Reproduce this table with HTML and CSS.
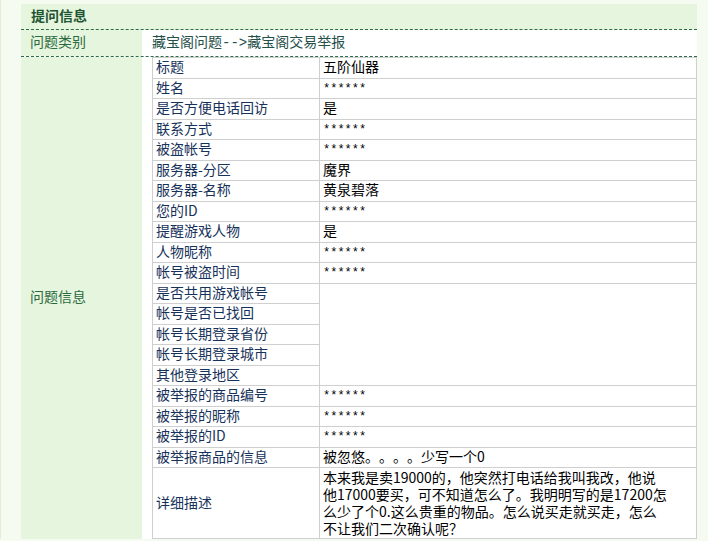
FILE: index.html
```html
<!DOCTYPE html>
<html lang="zh-CN">
<head>
<meta charset="utf-8">
<title>提问信息</title>
<link rel="stylesheet" href="styles.css">
</head>
<body>
<div class="page">
  <div class="panel">
    <div class="head">提问信息</div>
    <div class="row row-cat">
      <div class="label">问题类别</div>
      <div class="cat-value">藏宝阁问题<span class="arrow">--&gt;</span>藏宝阁交易举报</div>
    </div>
    <div class="row row-info">
      <div class="label label-mid">问题信息</div>
      <div class="info-cell">
        <table class="info">
          <tr><td class="k">标题</td><td class="v">五阶仙器</td></tr>
          <tr><td class="k">姓名</td><td class="v star">******</td></tr>
          <tr><td class="k">是否方便电话回访</td><td class="v">是</td></tr>
          <tr><td class="k">联系方式</td><td class="v star">******</td></tr>
          <tr><td class="k">被盗帐号</td><td class="v star">******</td></tr>
          <tr><td class="k">服务器-分区</td><td class="v">魔界</td></tr>
          <tr><td class="k">服务器-名称</td><td class="v">黄泉碧落</td></tr>
          <tr><td class="k">您的ID</td><td class="v star">******</td></tr>
          <tr><td class="k">提醒游戏人物</td><td class="v">是</td></tr>
          <tr><td class="k">人物昵称</td><td class="v star">******</td></tr>
          <tr><td class="k">帐号被盗时间</td><td class="v star">******</td></tr>
          <tr><td class="k">是否共用游戏帐号</td><td class="v" rowspan="5"></td></tr>
          <tr><td class="k">帐号是否已找回</td></tr>
          <tr><td class="k">帐号长期登录省份</td></tr>
          <tr><td class="k">帐号长期登录城市</td></tr>
          <tr><td class="k">其他登录地区</td></tr>
          <tr><td class="k">被举报的商品编号</td><td class="v star">******</td></tr>
          <tr><td class="k">被举报的昵称</td><td class="v star">******</td></tr>
          <tr><td class="k">被举报的ID</td><td class="v star">******</td></tr>
          <tr><td class="k">被举报商品的信息</td><td class="v">被忽悠。。。。少写一个0</td></tr>
          <tr class="detail"><td class="k">详细描述</td><td class="v">本来我是卖19000的，他突然打电话给我叫我改，他说<br>他17000要买，可不知道怎么了。我明明写的是17200怎<br>么少了个0.这么贵重的物品。怎么说买走就买走，怎么<br>不让我们二次确认呢？</td></tr>
        </table>
      </div>
    </div>
  </div>
</div>
</body>
</html>
```
FILE: styles.css
```css
html, body {
  margin: 0;
  padding: 0;
}
body {
  background: #f5fbf1;
  font-family: "Noto Sans CJK SC", "Liberation Sans", sans-serif;
  font-size: 14px;
  color: #000;
  text-spacing-trim: space-all;
}
.page {
  border-left: 1px solid #e2efd8;
  padding: 4px 11px 0 20px;
}
.panel {
  background: #fff;
}
.head {
  height: 25px;
  line-height: 23px;
  padding-left: 10px;
  background: #e6f5de;
  color: #1e5634;
  font-weight: bold;
  border-bottom: 1px dashed #2f6a4c;
}
.row {
  display: grid;
  grid-template-columns: 121px 1fr;
}
.row-cat {
  height: 26px;
  border-bottom: 1px dashed #2f6a4c;
}
.label {
  background: #e6f5de;
  color: #2c6a40;
  padding-left: 9px;
  line-height: 23px;
}
.label-mid {
  display: flex;
  align-items: center;
  padding-bottom: 4px;
}
.cat-value {
  padding-left: 10px;
  line-height: 23px;
  color: #25504a;
}
.arrow {
  font-family: "Liberation Mono", monospace;
}
.info-cell {
  padding-left: 10px;
}
.info {
  width: 100%;
  border-collapse: collapse;
}
.info td {
  border: 1px solid #cfcfcf;
  padding: 0 3px 2px;
  height: 17.5px;
  line-height: 17.5px;
  vertical-align: middle;
  white-space: nowrap;
}
.info td.k {
  width: 160px;
  color: #17325a;
}
.info td.v {
  color: #000;
}
.info td.star {
  font-family: "Liberation Mono", monospace;
  font-size: 12px;
  padding-top: 2px;
  padding-bottom: 0;
}
.detail td {
  padding-top: 1px;
  padding-bottom: 1px;
}
.detail td.v {
  line-height: 17px;
}
```
